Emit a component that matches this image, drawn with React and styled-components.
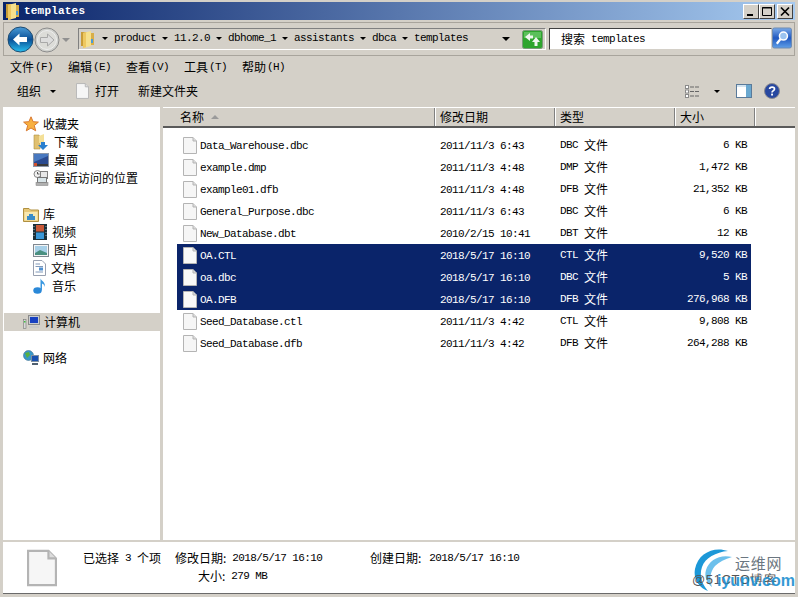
import React from "react";
import styled, { createGlobalStyle } from "styled-components";

const files = [
  { name: "Data_Warehouse.dbc", date: "2011/11/3 6:43", type: "DBC", size: "6" },
  { name: "example.dmp", date: "2011/11/3 4:48", type: "DMP", size: "1,472" },
  { name: "example01.dfb", date: "2011/11/3 4:48", type: "DFB", size: "21,352" },
  { name: "General_Purpose.dbc", date: "2011/11/3 6:43", type: "DBC", size: "6" },
  { name: "New_Database.dbt", date: "2010/2/15 10:41", type: "DBT", size: "12" },
  { name: "OA.CTL", date: "2018/5/17 16:10", type: "CTL", size: "9,520", selected: true },
  { name: "oa.dbc", date: "2018/5/17 16:10", type: "DBC", size: "5", selected: true },
  { name: "OA.DFB", date: "2018/5/17 16:10", type: "DFB", size: "276,968", selected: true },
  { name: "Seed_Database.ctl", date: "2011/11/3 4:42", type: "CTL", size: "9,808" },
  { name: "Seed_Database.dfb", date: "2011/11/3 4:42", type: "DFB", size: "264,288" },
];

const crumbs = ["product", "11.2.0", "dbhome_1", "assistants", "dbca", "templates"];
const menus = [
  ["文件", "(F)"],
  ["编辑", "(E)"],
  ["查看", "(V)"],
  ["工具", "(T)"],
  ["帮助", "(H)"],
];

const GlobalStyle = createGlobalStyle`
  html, body { margin: 0; padding: 0; background: #d4d0c8; }
  * { box-sizing: border-box; }
`;

const Window = styled.div`
  width: 798px;
  height: 597px;
  padding: 2px 3px 0;
  display: flex;
  flex-direction: column;
  overflow: hidden;
  position: relative;
  background: #d4d0c8;
  color: #000;
  font-family: "Noto Sans CJK SC", sans-serif;
  font-size: 12px;
  line-height: 16px;
`;

const Mono = styled.span`
  font-family: "Liberation Mono", monospace;
  font-size: 11px;
  letter-spacing: -0.6px;
  white-space: pre;
`;

const TitleBar = styled.div`
  height: 18px;
  flex: none;
  display: flex;
  align-items: center;
  gap: 5px;
  padding: 0 2px 0 3px;
  background: linear-gradient(90deg, #0a246a, #a6caf0);
`;

const TitleText = styled.span`
  flex: 1;
  color: #fff;
  font-family: "Liberation Mono", monospace;
  font-size: 11px;
  font-weight: bold;
  letter-spacing: 0.2px;
`;

const WinButtons = styled.div`
  display: flex;
  gap: 0;
`;

const WinButton = styled.div`
  width: 16px;
  height: 15px;
  margin-left: ${(p) => (p.$gap ? "2px" : "0")};
  background: #d4d0c8;
  border: 1px solid;
  border-color: #fff #404040 #404040 #fff;
  display: flex;
  align-items: center;
  justify-content: center;
`;

const NavBar = styled.div`
  height: 34px;
  flex: none;
  margin-top: 2px;
  padding: 4px 2px 0 3px;
  display: flex;
  align-items: flex-start;
  border: 1px solid;
  border-color: #808080 #fff #fff #808080;
  outline: 1px solid #a8a49c;
  outline-offset: -1px;
`;

const NavGroup = styled.div`
  width: 71px;
  height: 25px;
  flex: none;
  display: flex;
  align-items: center;
`;

const Address = styled.div`
  width: 468px;
  height: 22px;
  margin-top: 1px;
  flex: none;
  display: flex;
  align-items: center;
  padding: 0 2px 0 2px;
  border-left: 1px solid #808080;
  border-top: 1px solid #808080;
  border-right: 1px solid #fff;
  border-bottom: 1px solid #fff;
`;

const Crumbs = styled.div`
  flex: 1;
  display: flex;
  align-items: center;
  gap: 6px;
  margin: -2px 0 0 8px;
`;

const Arrow = styled.span`
  width: 0;
  height: 0;
  flex: none;
  margin-left: ${(p) => p.$left || 0}px;
  margin-right: ${(p) => p.$right || 0}px;
  border-left: ${(p) => p.$size || 3}px solid transparent;
  border-right: ${(p) => p.$size || 3}px solid transparent;
  border-top: ${(p) => p.$size || 3}px solid ${(p) => p.$color || "#000"};
`;

const Search = styled.div`
  width: 223px;
  height: 22px;
  margin: 1px 0 0 3px;
  flex: none;
  padding-left: 11px;
  display: flex;
  align-items: center;
  gap: 6px;
  background: #fff;
  border: 1px solid;
  border-color: #404040 #d4d0c8 #d4d0c8 #404040;
`;

const MenuBar = styled.div`
  height: 19px;
  flex: none;
  margin-top: 1px;
  padding: 0 0 0 7px;
  display: flex;
  align-items: center;
`;

const MenuItem = styled.div`
  width: 58px;
  display: flex;
  align-items: center;
  gap: 1px;
`;

const Toolbar = styled.div`
  height: 30px;
  flex: none;
  padding: 0 15px 0 14px;
  display: flex;
  align-items: center;
`;

const ToolLabel = styled.span`
  display: flex;
  margin-left: ${(p) => p.$left || 0}px;
`;

const Spacer = styled.div`
  flex: 1;
`;

const Panes = styled.div`
  flex: 1;
  min-height: 0;
  display: flex;
  gap: 3px;
  margin-top: 1px;
`;

const Sidebar = styled.div`
  width: 157px;
  flex: none;
  padding: 8px 0 0 1px;
  background: #fff;
`;

const NavSection = styled.div`
  margin-bottom: 18px;
`;

const NavRow = styled.div`
  height: 18px;
  display: flex;
  align-items: center;
  gap: ${(p) => (p.$child ? 5 : 4)}px;
  padding-left: ${(p) => (p.$child ? 29 : 19)}px;
  background: ${(p) => (p.$active ? "#d4d0c8" : "transparent")};
`;

const ListPane = styled.div`
  flex: 1;
  min-width: 0;
  display: flex;
  flex-direction: column;
  background: #fff;
`;

const ListHeader = styled.div`
  height: 21px;
  flex: none;
  display: flex;
  background: #d4d0c8;
  border-top: 1px solid #fff;
  border-bottom: 2px solid #5a5a5a;
`;

const HeaderCell = styled.div`
  width: ${(p) => p.$w}px;
  flex: ${(p) => (p.$w ? "none" : 1)};
  display: flex;
  align-items: center;
  gap: 7px;
  padding-left: ${(p) => p.$pad ?? 5}px;
  border-right: ${(p) => (p.$w ? "1px solid #808080" : "none")};
  box-shadow: ${(p) => (p.$w ? "1px 0 0 #fff" : "none")};
`;

const SortMark = styled.span`
  width: 0;
  height: 0;
  border-left: 4px solid transparent;
  border-right: 4px solid transparent;
  border-bottom: 4px solid #9a9a9a;
`;

const Rows = styled.div`
  padding: 6px 0 0 14px;
  width: 588px;
`;

const FileRow = styled.div`
  height: 22px;
  display: flex;
  align-items: center;
  background: ${(p) => (p.$selected ? "#0a246a" : "transparent")};
  color: ${(p) => (p.$selected ? "#fff" : "#000")};
`;

const FileIconBox = styled.div`
  width: 23px;
  padding-left: 6px;
  display: flex;
  flex: none;
`;

const NameCell = styled.div`
  width: 240px;
  flex: none;
`;

const DateCell = styled.div`
  width: 120px;
  flex: none;
`;

const TypeCell = styled.div`
  width: 80px;
  flex: none;
  display: flex;
  gap: 6px;
  align-items: center;
`;

const SizeCell = styled.div`
  width: 107px;
  flex: none;
  display: flex;
  justify-content: flex-end;
`;

const StatusBar = styled.div`
  height: 51px;
  flex: none;
  margin-top: 2px;
  padding: 5px 0 0 24px;
  display: flex;
  background: #fff;
  border-top: 1px solid #fff;
`;

const StatusGrid = styled.div`
  margin-left: 26px;
  display: grid;
  grid-template-columns: 92px 195px 160px;
  grid-auto-rows: 18px;
  padding-top: 1px;
  align-items: center;
`;

const StatusField = styled.div`
  display: flex;
  align-items: center;
  gap: ${(p) => p.$gap || 0}px;
  padding-left: ${(p) => p.$pad || 0}px;
`;

const BottomEdge = styled.div`
  height: 4px;
  flex: none;
  border-top: 1px solid #6a6a6a;
`;

const Watermark = styled.div`
  position: absolute;
  left: 690px;
  bottom: 4px;
  width: 108px;
  height: 46px;
`;

const WatermarkTop = styled.span`
  position: absolute;
  left: 45px;
  top: 8px;
  color: #6b7680;
  font-size: 15px;
  letter-spacing: 0.8px;
`;

const WatermarkGray = styled.span`
  position: absolute;
  left: 2px;
  top: 25px;
  color: #555;
  font-family: "Liberation Sans", sans-serif;
  font-size: 13px;
  letter-spacing: 0.6px;
  white-space: nowrap;
`;

const WatermarkBlue = styled.span`
  position: absolute;
  left: 27px;
  top: 26px;
  color: #1c8fd0;
  opacity: 0.9;
  font-family: "Liberation Sans", sans-serif;
  font-size: 16px;
  font-weight: bold;
  white-space: nowrap;
`;

function DocIcon({ w = 14, h = 17, selected }) {
  return (
    <svg width={w} height={h} viewBox="0 0 14 17">
      <path d="M.5.5H10L13.5 4V16.5H.5Z" fill={selected ? "#f8f8f8" : "#f6f6f6"} stroke="#b4b4b4" />
      <path d="M10 .5V4H13.5" fill="#dcdcdc" stroke="#b4b4b4" />
    </svg>
  );
}

function Folder({ w = 13, h = 17 }) {
  return (
    <svg width={w} height={h} viewBox="0 0 13 17">
      <path d="M0 1H6V15H0Z" fill="#c89c38" />
      <path d="M2 2L10 0V15L2 17Z" fill="#f6e08c" />
      <path d="M2 2L5 1.4V16.3L2 17Z" fill="#eec860" />
      <path d="M10 2H13V14H10Z" fill="#d8ae48" />
      <rect x="10" y="8" width="2" height="4" fill="#4a9ad8" />
    </svg>
  );
}

function BackButton() {
  return (
    <svg width="27" height="27" viewBox="0 0 27 27">
      <defs>
        <linearGradient id="backBlue" x1="0" y1="0" x2="0" y2="1">
          <stop offset="0" stopColor="#4a9cd8" />
          <stop offset=".5" stopColor="#0a4f96" />
          <stop offset="1" stopColor="#28c0f0" />
        </linearGradient>
      </defs>
      <circle cx="13.5" cy="13.5" r="12.5" fill="url(#backBlue)" stroke="#1c4a70" />
      <path d="M6 13.5L12.5 7.5V11H20V16H12.5V19.5Z" fill="#fff" />
    </svg>
  );
}

function ForwardButton() {
  return (
    <svg width="26" height="26" viewBox="0 0 26 26">
      <circle cx="13" cy="13" r="12" fill="#cfd0cc" stroke="#8c8c8c" />
      <circle cx="13" cy="13" r="9.5" fill="#dcdcd8" stroke="#eee" />
      <path d="M20 13L13.5 7V10.5H6.5V15.5H13.5V19Z" fill="#ddd" stroke="#a8a8a8" />
    </svg>
  );
}

function Refresh() {
  return (
    <svg width="21" height="19" viewBox="0 0 21 19">
      <rect x=".5" y=".5" width="20" height="18" rx="2" fill="#2ea52e" stroke="#7a9a7a" />
      <rect x="2" y="2" width="17" height="6" fill="#5cc05c" />
      <path d="M3 7L8 3V5.5H11V8.5H8V11Z" fill="#f0f6f0" />
      <path d="M14 7L18 12H15.5V16H12.5V12H10Z" fill="#f0f6f0" />
    </svg>
  );
}

function SearchButton() {
  return (
    <svg width="21" height="22" viewBox="0 0 21 22">
      <defs>
        <linearGradient id="searchBlue" x1="0" y1="0" x2="0" y2="1">
          <stop offset="0" stopColor="#7aaae8" />
          <stop offset=".5" stopColor="#2058c0" />
          <stop offset="1" stopColor="#60a0e8" />
        </linearGradient>
      </defs>
      <rect x=".5" y=".5" width="20" height="21" rx="2" fill="url(#searchBlue)" stroke="#6a88b0" />
      <circle cx="12" cy="9" r="4.2" fill="#9cc4f0" stroke="#fff" strokeWidth="1.6" />
      <path d="M9 12L5 17" stroke="#fff" strokeWidth="2.4" />
    </svg>
  );
}

function WinGlyph({ kind }) {
  return (
    <svg width="12" height="11" viewBox="0 0 12 11">
      {kind === "min" && <rect x="2" y="8" width="6" height="2" fill="#000" />}
      {kind === "max" && (
        <path d="M1.5 1.5H10.5V9.5H1.5ZM1 2H11" fill="none" stroke="#000" />
      )}
      {kind === "close" && <path d="M2 1.5L10 9.5M10 1.5L2 9.5" stroke="#000" strokeWidth="1.7" />}
    </svg>
  );
}

function ViewsIcon() {
  return (
    <svg width="15" height="13" viewBox="0 0 15 13">
      {[0, 4.5, 9].map((y) => (
        <g key={y}>
          <rect x=".5" y={y + 0.5} width="3" height="3" fill="#fff" stroke="#8a8a8a" />
          <path d={`M5 ${y + 2}H15`} stroke="#666" strokeDasharray="4 1" />
        </g>
      ))}
    </svg>
  );
}

function PreviewIcon() {
  return (
    <svg width="16" height="14" viewBox="0 0 16 14">
      <rect x=".5" y=".5" width="15" height="13" fill="#fff" stroke="#5a7a9a" />
      <rect x="10" y="1" width="5" height="12" fill="#6aa8d0" />
      <path d="M1 2H10" stroke="#a8c8e0" />
    </svg>
  );
}

function HelpIcon() {
  return (
    <svg width="16" height="16" viewBox="0 0 16 16">
      <circle cx="8" cy="8" r="7.5" fill="#2848a0" stroke="#8a8a90" />
      <path d="M5.6 6C5.8 3.4 10.5 3.4 10.5 6C10.5 7.6 8 7.6 8 9.6" fill="none" stroke="#fff" strokeWidth="1.7" />
      <rect x="7.1" y="10.6" width="1.9" height="1.9" fill="#fff" />
    </svg>
  );
}

function StarIcon() {
  return (
    <svg width="16" height="16" viewBox="0 0 16 16">
      <path d="M8 .8L10.1 5.7L15.4 6.1L11.3 9.5L12.7 14.8L8 12L3.3 14.8L4.7 9.5L.6 6.1L5.9 5.7Z" fill="#f8b040" stroke="#d87830" />
    </svg>
  );
}

function DownloadIcon() {
  return (
    <svg width="16" height="16" viewBox="0 0 16 16">
      <path d="M1 1H6L7 3V15H1Z" fill="#e0c070" stroke="#b09040" strokeWidth=".6" />
      <path d="M6 2L11 0V9H6Z" fill="#f4e098" />
      <path d="M8 8H12V11H15L10 16L5 11H8Z" fill="#2a80d0" />
    </svg>
  );
}

function DesktopIcon() {
  return (
    <svg width="16" height="14" viewBox="0 0 16 14">
      <rect x=".5" y=".5" width="15" height="13" fill="#2a4a90" stroke="#8a96a8" />
      <path d="M1 9L15 3V1H1Z" fill="#4878c0" />
      <rect x="1" y="11" width="14" height="2" fill="#3a3a3a" />
      <rect x="1" y="10" width="3" height="3" fill="#d05030" />
    </svg>
  );
}

function RecentIcon() {
  return (
    <svg width="16" height="16" viewBox="0 0 16 16">
      <circle cx="4.5" cy="4" r="3.5" fill="#f0f0f0" stroke="#888" />
      <path d="M4.5 2V4H6.5" stroke="#555" fill="none" />
      <rect x="7.5" y="1.5" width="7" height="7" fill="#e8e8e8" stroke="#808080" />
      <rect x="4.5" y="7.5" width="9" height="5" fill="#d8e4e8" stroke="#777" />
      <rect x="3" y="12.5" width="12" height="3" fill="#b0b0b0" stroke="#808080" strokeWidth=".5" />
    </svg>
  );
}

function LibraryIcon() {
  return (
    <svg width="16" height="15" viewBox="0 0 16 15">
      <path d="M.5 1.5H6L7.5 3H15.5V14.5H.5Z" fill="#e8c878" stroke="#b09040" />
      <path d="M1.5 5H14.5V13.5H1.5Z" fill="#f8e8b0" />
      <path d="M4 13V9H6V7H10V9H12V13Z" fill="#3a8cc8" />
    </svg>
  );
}

function VideoIcon() {
  return (
    <svg width="14" height="16" viewBox="0 0 14 16">
      <rect width="14" height="16" fill="#1c3038" />
      <rect x="3" y="1" width="8" height="6.5" fill="#c85838" />
      <rect x="3" y="8.5" width="8" height="6.5" fill="#3a98d8" />
      <path d="M1 2V14M13 2V14" stroke="#9ab" strokeDasharray="1 2" />
    </svg>
  );
}

function PictureIcon() {
  return (
    <svg width="16" height="13" viewBox="0 0 16 13">
      <rect x=".5" y=".5" width="15" height="12" fill="#f4f4f4" stroke="#808890" />
      <rect x="2" y="2" width="12" height="9" fill="#a8d0e8" />
      <path d="M2 9L7 6L14 9V11H2Z" fill="#4a9080" />
    </svg>
  );
}

function DocumentIcon() {
  return (
    <svg width="13" height="16" viewBox="0 0 13 16">
      <path d="M.5.5H9L12.5 4V15.5H.5Z" fill="#fff" stroke="#98a0b0" />
      <path d="M2.5 4H7M2.5 6.5H10M2.5 12H10" stroke="#8098b8" />
      <rect x="6" y="7.5" width="4" height="3" fill="#5090d0" />
    </svg>
  );
}

function MusicIcon() {
  return (
    <svg width="14" height="16" viewBox="0 0 14 16">
      <ellipse cx="4.5" cy="12.5" rx="4.2" ry="3.2" fill="#2a88d8" />
      <path d="M7.5 12V.5C8.5 3 12.5 4 12 9C11.5 6.5 10 6 9 5.5V12.5Z" fill="#3a98e0" />
    </svg>
  );
}

function ComputerIcon() {
  return (
    <svg width="17" height="14" viewBox="0 0 17 14">
      <rect x="5.5" y=".5" width="11" height="9" fill="#c8ccd0" stroke="#8a8a8a" />
      <rect x="7" y="2" width="8" height="6" fill="#1840c0" />
      <rect x="6" y="11" width="10" height="2" fill="#c8c8c8" />
      <rect x=".5" y="4.5" width="2.5" height="9" fill="#d8d8d8" stroke="#777" strokeWidth=".6" />
      <rect x="1" y="6" width="1.5" height="1.5" fill="#40c040" />
    </svg>
  );
}

function NetworkIcon() {
  return (
    <svg width="16" height="16" viewBox="0 0 16 16">
      <circle cx="5.5" cy="5.5" r="5" fill="#3898c8" stroke="#407090" strokeWidth=".6" />
      <path d="M2 3L6 2L7 5L4 8Z" fill="#58b040" />
      <rect x="8.5" y="5.5" width="7" height="6" fill="#1850b0" stroke="#8090a0" />
      <rect x="9" y="13" width="6" height="2" fill="#506070" />
    </svg>
  );
}

function LogoSwirl() {
  return (
    <svg width="44" height="46" viewBox="0 0 44 46">
      <path d="M38 4C24 -1 8 6 5 22C3 32 9 41 18 44C12 37 9 29 12 20C15 11 26 5 38 4Z" fill="#1c98d8" />
      <path d="M42 10C30 7 19 13 16 23C14 30 17 36 22 40C19 32 20 25 25 19C29 15 35 12 42 10Z" fill="#6cc0ec" />
    </svg>
  );
}

function NavItem({ icon, label, child, active }) {
  return (
    <NavRow $child={child} $active={active}>
      {icon}
      <span>{label}</span>
    </NavRow>
  );
}

export default function App() {
  return (
    <Window>
      <GlobalStyle />
      <TitleBar>
        <Folder w={13} h={17} />
        <TitleText>templates</TitleText>
        <WinButtons>
          <WinButton><WinGlyph kind="min" /></WinButton>
          <WinButton><WinGlyph kind="max" /></WinButton>
          <WinButton $gap><WinGlyph kind="close" /></WinButton>
        </WinButtons>
      </TitleBar>

      <NavBar>
        <NavGroup>
          <BackButton />
          <ForwardButton />
          <Arrow $size={4} $color="#909090" $left={2} />
        </NavGroup>
        <Address>
          <Folder />
          <Crumbs>
            <Arrow />
            {crumbs.map((c, i) => (
              <React.Fragment key={c}>
                <Mono>{c}</Mono>
                {i < crumbs.length - 1 && <Arrow />}
              </React.Fragment>
            ))}
          </Crumbs>
          <Arrow $size={4} $right={12} />
          <Refresh />
        </Address>
        <Search>
          <span>搜索</span>
          <Mono>templates</Mono>
        </Search>
        <SearchButton />
      </NavBar>

      <MenuBar>
        {menus.map(([label, key]) => (
          <MenuItem key={key}>
            {label}
            <Mono>{key}</Mono>
          </MenuItem>
        ))}
      </MenuBar>

      <Toolbar>
        <span>组织</span>
        <Arrow $size={3} $left={9} />
        <ToolLabel $left={20}><DocIcon w={13} h={16} /></ToolLabel>
        <ToolLabel $left={6}>打开</ToolLabel>
        <ToolLabel $left={19}>新建文件夹</ToolLabel>
        <Spacer />
        <ViewsIcon />
        <Arrow $size={3} $left={14} />
        <ToolLabel $left={16}><PreviewIcon /></ToolLabel>
        <ToolLabel $left={12}><HelpIcon /></ToolLabel>
      </Toolbar>

      <Panes>
        <Sidebar>
          <NavSection>
            <NavItem icon={<StarIcon />} label="收藏夹" />
            <NavItem child icon={<DownloadIcon />} label="下载" />
            <NavItem child icon={<DesktopIcon />} label="桌面" />
            <NavItem child icon={<RecentIcon />} label="最近访问的位置" />
          </NavSection>
          <NavSection>
            <NavItem icon={<LibraryIcon />} label="库" />
            <NavItem child icon={<VideoIcon />} label="视频" />
            <NavItem child icon={<PictureIcon />} label="图片" />
            <NavItem child icon={<DocumentIcon />} label="文档" />
            <NavItem child icon={<MusicIcon />} label="音乐" />
          </NavSection>
          <NavSection>
            <NavItem active icon={<ComputerIcon />} label="计算机" />
          </NavSection>
          <NavSection>
            <NavItem icon={<NetworkIcon />} label="网络" />
          </NavSection>
        </Sidebar>

        <ListPane>
          <ListHeader>
            <HeaderCell $w={272} $pad={17}>名称<SortMark /></HeaderCell>
            <HeaderCell $w={120}>修改日期</HeaderCell>
            <HeaderCell $w={120}>类型</HeaderCell>
            <HeaderCell $w={80}>大小</HeaderCell>
            <HeaderCell />
          </ListHeader>
          <Rows>
            {files.map((f) => (
              <FileRow key={f.name} $selected={f.selected}>
                <FileIconBox><DocIcon selected={f.selected} /></FileIconBox>
                <NameCell><Mono>{f.name}</Mono></NameCell>
                <DateCell><Mono>{f.date}</Mono></DateCell>
                <TypeCell><Mono>{f.type}</Mono>文件</TypeCell>
                <SizeCell><Mono>{f.size} KB</Mono></SizeCell>
              </FileRow>
            ))}
          </Rows>
        </ListPane>
      </Panes>

      <StatusBar>
        <DocIcon w={30} h={40} />
        <StatusGrid>
          <StatusField $gap={6}>已选择<Mono>3</Mono>个项</StatusField>
          <StatusField>修改日期:<Mono> 2018/5/17 16:10</Mono></StatusField>
          <StatusField $gap={2}>创建日期:<Mono> 2018/5/17 16:10</Mono></StatusField>
          <span />
          <StatusField $pad={23}>大小:<Mono> 279 MB</Mono></StatusField>
        </StatusGrid>
      </StatusBar>
      <BottomEdge />

      <Watermark>
        <LogoSwirl />
        <WatermarkTop>运维网</WatermarkTop>
        <WatermarkGray>@51CTO博客</WatermarkGray>
        <WatermarkBlue>iyunv.com</WatermarkBlue>
      </Watermark>
    </Window>
  );
}
